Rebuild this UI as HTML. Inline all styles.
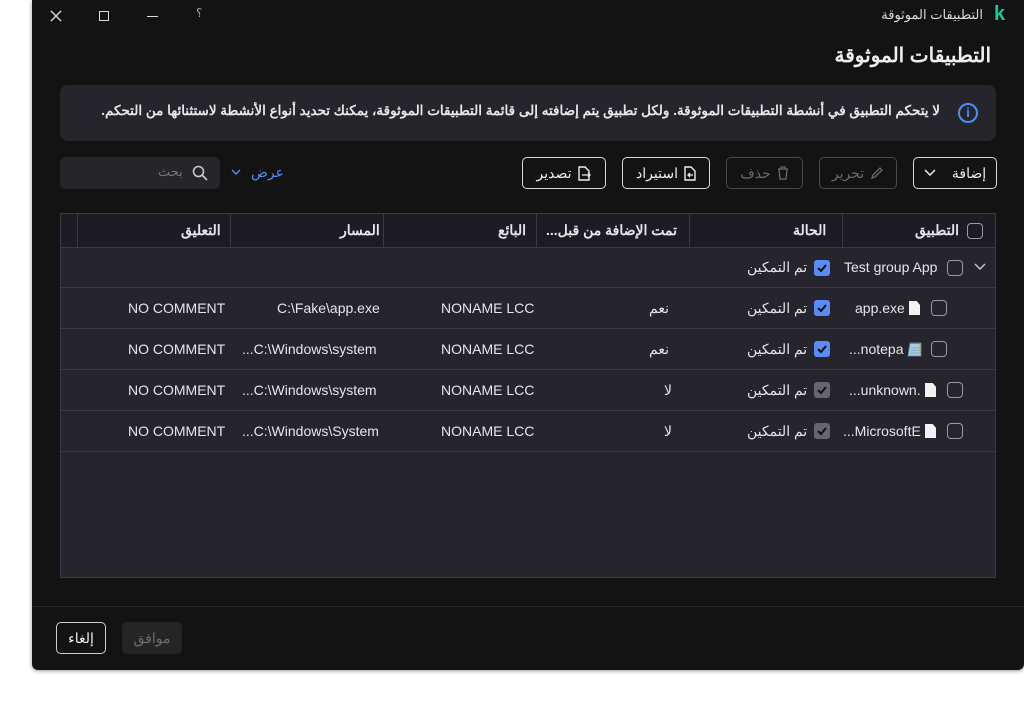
<!DOCTYPE html>
<html><head><meta charset="utf-8"><style>
*{box-sizing:border-box;margin:0;padding:0}
body{width:1024px;height:702px;background:#fff;font-family:"Liberation Sans","Noto Sans CJK SC",sans-serif;color:#e8e8ea;position:relative;overflow:hidden}
.win{position:absolute;left:32px;top:0;width:992px;height:670px;background:#131313;border-radius:0 0 6px 6px;box-shadow:0 1px 4px rgba(0,0,0,.4)}
.a{position:absolute;white-space:nowrap}
.btn{position:absolute;height:32px;border:1px solid #d8d8d8;border-radius:5px;font-size:14px;display:flex;align-items:center;justify-content:center;gap:6px;direction:rtl;color:#eee}
.dis{border-color:#4a4a4a;color:#6a6a6a}
.cb{position:absolute;width:16px;height:16px;border:1.5px solid #9a9aa2;border-radius:4px}
.ck{position:absolute;width:16px;height:16px;border-radius:3px;background:#5b8cf6}
.ck.g{background:#66666e}
.ck svg{position:absolute;left:2px;top:2px}
.t{font-size:14px;color:#e6e6e8}
.lo{direction:ltr;unicode-bidi:bidi-override}
.hl{position:absolute;top:213px;height:34px;width:1px;background:#3a3a44}
.rl{position:absolute;left:60px;width:936px;height:1px;background:#3b3b45}
.doc{position:absolute;width:11px;height:14px;background:#f2f2f2;clip-path:polygon(0 0,70% 0,100% 28%,100% 100%,0 100%)}
</style></head><body>
<div class="win">
 <svg class="a" style="left:18px;top:10px" width="12" height="12"><path d="M1 1L11 11M11 1L1 11" stroke="#ddd" stroke-width="1.3"/></svg>
 <div class="a" style="left:67px;top:11px;width:10px;height:10px;border:1.3px solid #ddd"></div>
 <div class="a" style="left:115px;top:16px;width:11px;height:1.3px;background:#ddd"></div>
 <div class="a" style="left:164px;top:6px;font-size:12px;color:#aaa">؟</div>
 <div class="a" style="left:751px;top:7px;width:200px;text-align:right;font-size:13px;color:#ddd;direction:rtl">التطبيقات الموثوقة</div>
 <div class="a" style="left:962px;top:3px;font-size:20px;font-weight:bold;color:#1ec59a">k</div>
 <div class="a" style="left:659px;top:43px;width:300px;text-align:right;font-size:20px;font-weight:bold;color:#eee;direction:rtl">التطبيقات الموثوقة</div>
 <div class="a" style="left:28px;top:85px;width:936px;height:56px;background:#26252c;border-radius:8px"></div>
 <div class="a" style="left:40px;top:103px;font-size:13.5px;font-weight:bold;color:#e8e8e8;direction:rtl;width:868px;text-align:right">لا يتحكم التطبيق في أنشطة التطبيقات الموثوقة. ولكل تطبيق يتم إضافته إلى قائمة التطبيقات الموثوقة، يمكنك تحديد أنواع الأنشطة لاستثنائها من التحكم.</div>
 <div class="a" style="left:926px;top:103px;width:20px;height:20px;border:2px solid #4e8ef7;border-radius:50%;color:#4e8ef7;font-size:13px;font-weight:bold;text-align:center;line-height:16px">i</div>

 <div class="btn" style="left:881px;top:157px;width:84px"><span>إضافة</span><svg width="12" height="8" style="margin-right:10px"><path d="M1 1l5 5 5-5" stroke="#eee" fill="none" stroke-width="1.5"/></svg></div>
 <div class="btn dis" style="left:787px;top:157px;width:78px"><svg width="14" height="14"><path d="M2 12l1-3 7-7 2 2-7 7z" stroke="#6a6a6a" fill="none" stroke-width="1.3"/></svg><span>تحرير</span></div>
 <div class="btn dis" style="left:694px;top:157px;width:77px"><svg width="12" height="14"><path d="M1 3h10M4 3V1h4v2M2 3l1 10h6l1-10" stroke="#6a6a6a" fill="none" stroke-width="1.3"/></svg><span>حذف</span></div>
 <div class="btn" style="left:590px;top:157px;width:88px"><svg width="12" height="15"><path d="M1 1h6l4 4v9H1z" stroke="#eee" fill="none" stroke-width="1.4"/><path d="M4 9h5M6 7l-2 2 2 2" stroke="#eee" fill="none" stroke-width="1.3"/></svg><span>استيراد</span></div>
 <div class="btn" style="left:490px;top:157px;width:84px"><svg width="14" height="15"><path d="M1 1h6l4 4v9H1z" stroke="#eee" fill="none" stroke-width="1.4"/><path d="M4 9h8M10 7l2 2-2 2" stroke="#eee" fill="none" stroke-width="1.3"/></svg><span>تصدير</span></div>
 <div class="a" style="left:219px;top:164px;font-size:14px;color:#5b8cf6;direction:rtl">عرض</div>
 <svg class="a" style="left:199px;top:169px" width="10" height="7"><path d="M1 1l4 4 4-4" stroke="#5b8cf6" fill="none" stroke-width="1.4"/></svg>
 <div class="a" style="left:28px;top:157px;width:160px;height:32px;background:#26262a;border-radius:6px"></div>
 <svg class="a" style="left:160px;top:165px" width="16" height="16"><circle cx="6.5" cy="6.5" r="5" stroke="#ccc" fill="none" stroke-width="1.5"/><path d="M10 10L15 15" stroke="#ccc" stroke-width="1.6"/></svg>
 <div class="a" style="left:126px;top:164px;font-size:13px;color:#777">بحث</div>
</div>

<div class="a" style="left:60px;top:213px;width:936px;height:365px;background:#26252e;border:1px solid #3b3b45"></div>
<div class="a" style="left:60px;top:213px;width:936px;height:35px;background:#1d1c25;border:1px solid #3b3b45"></div>
<div class="hl" style="left:77px"></div><div class="hl" style="left:230px"></div><div class="hl" style="left:383px"></div><div class="hl" style="left:536px"></div><div class="hl" style="left:689px"></div><div class="hl" style="left:842px"></div>
<div class="rl" style="top:287px"></div><div class="rl" style="top:328px"></div><div class="rl" style="top:369px"></div><div class="rl" style="top:410px"></div><div class="rl" style="top:451px"></div>

<div class="cb" style="left:967px;top:223px"></div>
<div class="a t" style="left:915px;top:222px;font-weight:bold">التطبيق</div>
<div class="a t" style="left:793px;top:222px;font-weight:bold">الحالة</div>
<div class="a t" style="left:546px;top:222px;font-weight:bold;direction:rtl">تمت الإضافة من قبل...</div>
<div class="a t" style="left:498px;top:222px;font-weight:bold">البائع</div>
<div class="a t" style="left:340px;top:222px;font-weight:bold">المسار</div>
<div class="a t" style="left:181px;top:222px;font-weight:bold">التعليق</div>

<svg class="a" style="left:974px;top:263px" width="12" height="8"><path d="M1 1l5 5 5-5" stroke="#ccc" fill="none" stroke-width="1.4"/></svg>
<div class="cb" style="left:947px;top:260px"></div>
<div class="a t" style="left:844px;top:259px">Test group App</div>
<div class="ck" style="left:814px;top:260px"><svg width="12" height="12"><path d="M2 6l3 3 5-6" stroke="#111" fill="none" stroke-width="2"/></svg></div>
<div class="a t" style="left:747px;top:259px">تم التمكين</div>

<div class="cb" style="left:931px;top:300px"></div><div class="doc" style="left:909px;top:301px"></div><div class="a t" style="left:855px;top:300px">app.exe</div>
<div class="cb" style="left:931px;top:341px"></div>
<svg class="a" style="left:907px;top:340px" width="15" height="17"><path d="M3 3h11v13H1z" fill="#a8cbe0" stroke="#6f8aa0" stroke-width="0.8"/><path d="M4 2v2M6 2v2M8 2v2M10 2v2M12 2v2" stroke="#555" stroke-width="0.9"/><path d="M4 8h8M4 10.5h8M3.5 13h8" stroke="#6d8fa6" stroke-width="0.6"/><path d="M13 4v12" stroke="#c9a64a" stroke-width="1"/></svg>
<div class="a t lo" style="left:849px;top:341px">...notepa</div>
<div class="cb" style="left:947px;top:382px"></div><div class="doc" style="left:925px;top:383px"></div><div class="a t lo" style="left:849px;top:382px">...unknown.</div>
<div class="cb" style="left:947px;top:423px"></div><div class="doc" style="left:925px;top:424px"></div><div class="a t lo" style="left:843px;top:423px">...MicrosoftE</div>

<div class="ck" style="left:814px;top:300px"><svg width="12" height="12"><path d="M2 6l3 3 5-6" stroke="#111" fill="none" stroke-width="2"/></svg></div><div class="a t" style="left:747px;top:300px">تم التمكين</div>
<div class="ck" style="left:814px;top:341px"><svg width="12" height="12"><path d="M2 6l3 3 5-6" stroke="#111" fill="none" stroke-width="2"/></svg></div><div class="a t" style="left:747px;top:341px">تم التمكين</div>
<div class="ck g" style="left:814px;top:382px"><svg width="12" height="12"><path d="M2 6l3 3 5-6" stroke="#111" fill="none" stroke-width="2"/></svg></div><div class="a t" style="left:747px;top:382px">تم التمكين</div>
<div class="ck g" style="left:814px;top:423px"><svg width="12" height="12"><path d="M2 6l3 3 5-6" stroke="#111" fill="none" stroke-width="2"/></svg></div><div class="a t" style="left:747px;top:423px">تم التمكين</div>

<div class="a t" style="left:649px;top:300px">نعم</div><div class="a t" style="left:649px;top:341px">نعم</div><div class="a t" style="left:664px;top:382px">لا</div><div class="a t" style="left:664px;top:423px">لا</div>
<div class="a t" style="left:441px;top:300px">NONAME LCC</div><div class="a t" style="left:441px;top:341px">NONAME LCC</div><div class="a t" style="left:441px;top:382px">NONAME LCC</div><div class="a t" style="left:441px;top:423px">NONAME LCC</div>
<div class="a t" style="left:277px;top:300px">C:\Fake\app.exe</div><div class="a t" style="left:242px;top:341px">...C:\Windows\system</div><div class="a t" style="left:242px;top:382px">...C:\Windows\system</div><div class="a t" style="left:242px;top:423px">...C:\Windows\System</div>
<div class="a t" style="left:128px;top:300px">NO COMMENT</div><div class="a t" style="left:128px;top:341px">NO COMMENT</div><div class="a t" style="left:128px;top:382px">NO COMMENT</div><div class="a t" style="left:128px;top:423px">NO COMMENT</div>

<div class="a" style="left:32px;top:606px;width:992px;height:1px;background:#262626"></div>
<div class="btn" style="left:56px;top:622px;width:50px;height:32px;border-color:#cfcfcf">إلغاء</div>
<div class="a" style="left:122px;top:622px;width:60px;height:32px;background:#252525;border-radius:5px;color:#6d6d6d;font-size:14px;text-align:center;line-height:32px">موافق</div>
</body></html>
